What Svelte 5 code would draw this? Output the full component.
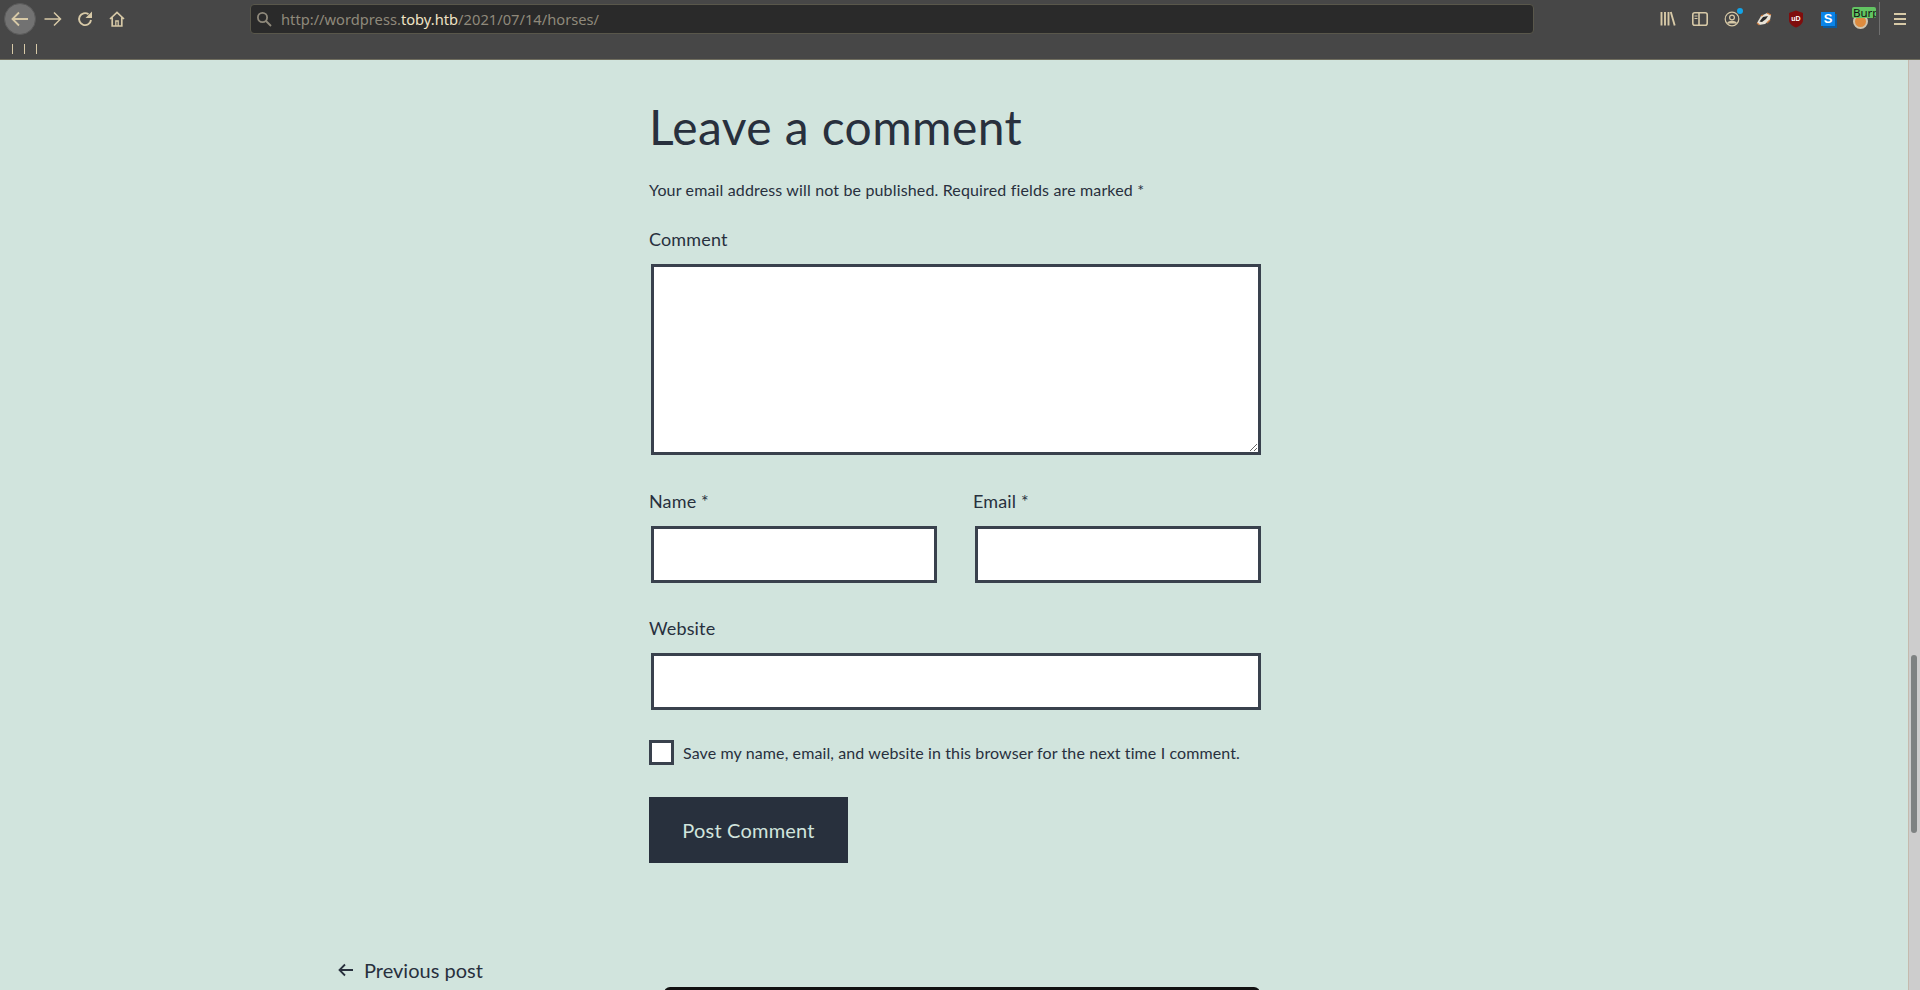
<script>
	const marks = [1, 2, 3];
</script>

<div class="page">
	<header class="chrome">
		<div class="navbar">
			<div class="back">
				<svg width="18" height="18" viewBox="0 0 18 18" fill="none" stroke="#d7c9a7" stroke-width="1.8"><path d="M17 9H1.500M8 2.500 1.500 9 8 15.500"/></svg>
			</div>
			<button class="tool first">
				<svg width="18" height="16" viewBox="0 0 18 16" fill="none" stroke="#d7c9a7" stroke-width="1.5"><path d="M0.500 8h16M10 1.500l6.500 6.500-6.500 6.500"/></svg>
			</button>
			<button class="tool">
				<svg width="16" height="16" viewBox="0 0 16 16" fill="none" stroke="#d7c9a7" stroke-width="1.900"><path d="M14 9A6 6 0 1 1 11.500 3.200"/><path d="M15 0.500v6.500H8.500z" fill="#d7c9a7" stroke="none"/></svg>
			</button>
			<button class="tool">
				<svg width="16" height="16" viewBox="0 0 16 16" fill="none" stroke="#d7c9a7" stroke-width="1.700"><path d="M1 8 8 1.500 15 8M3.200 6.500v8.500h9.600V6.500"/><path d="M6.800 15V10h2.400v5" stroke-width="1.300"/></svg>
			</button>
			<div class="urlbar">
				<svg width="16" height="16" viewBox="0 0 16 16" fill="none" stroke="#8f897b" stroke-width="1.800"><circle cx="6.500" cy="6.500" r="4.600"/><path d="m10 10 5 5"/></svg>
				<span class="url">http://wordpress.<b>toby.htb</b>/2021/07/14/horses/</span>
			</div>
			<div class="icons">
				<span class="slot"><svg width="16" height="15" viewBox="0 0 16 15" fill="none" stroke="#d7c9a7" stroke-width="1.900"><path d="M1.500 1v13.500M5 1v13.500M8.500 1v13.500M10.800 1l3.900 13.500"/></svg></span>
				<span class="slot"><svg width="16" height="14" viewBox="0 0 16 14" fill="none" stroke="#d7c9a7" stroke-width="1.600"><rect x="0.800" y="0.800" width="14.400" height="12.400" rx="2"/><path d="M7 1v12"/><path d="M2.500 4h3M2.500 6.500h3" stroke-width="1.100"/></svg></span>
				<span class="slot account">
					<svg width="16" height="16" viewBox="0 0 16 16" fill="none" stroke="#d7c9a7" stroke-width="1.200"><circle cx="8" cy="8" r="6.800"/><circle cx="8" cy="6.500" r="2.400"/><path d="M3.500 12.500c1-2.800 8-2.800 9 0" fill="#d7c9a7"/></svg>
					<i class="dot"></i>
				</span>
				<span class="slot"><svg width="16" height="14" viewBox="0 0 16 14"><path d="M1 11 5 4l6-3 4 2-1 5-5 4-6 1z" fill="#e8e2d6"/><path d="M3.500 9.500 7 5l5-1-2 3-4 3z" fill="#2a2a2a"/><path d="M1 11l2.500 2M11 1l4 2M5 4l2-1M14 8l-3 3" stroke="#c9773a" stroke-width="1.300" fill="none"/></svg></span>
				<span class="slot"><svg width="16" height="18" viewBox="0 0 16 18"><path d="M8 0.500 15 3v7c0 3.500-3.200 6-7 7.500-3.800-1.500-7-4-7-7.500V3z" fill="#7f0d0d"/><text x="8" y="11" class="ub">uD</text></svg></span>
				<span class="slot"><span class="stylus">S</span></span>
				<span class="slot burp"><i class="fox"></i><em>Burp</em></span>
			</div>
			<i class="sep"></i>
			<svg class="menu" width="12" height="12" viewBox="0 0 12 12" stroke="#d7c9a7" stroke-width="2"><path d="M0 1h12M0 6h12M0 11h12"/></svg>
		</div>
		<div class="bookmarks">
			{#each marks as m (m)}
				<span class="mark"></span>
			{/each}
		</div>
	</header>

	<div class="viewport">
		<main class="content">
			<section class="respond">
				<h2>Leave a comment</h2>
				<p class="notes">Your email address will not be published. Required fields are marked *</p>
				<label class="field">
					<span>Comment</span>
					<textarea></textarea>
				</label>
				<div class="pair">
					<label class="field">
						<span>Name *</span>
						<input type="text" />
					</label>
					<label class="field">
						<span>Email *</span>
						<input type="text" />
					</label>
				</div>
				<label class="field">
					<span>Website</span>
					<input type="text" />
				</label>
				<label class="save">
					<i class="box"></i>
					<span>Save my name, email, and website in this browser for the next time I comment.</span>
				</label>
				<button class="submit">Post Comment</button>
			</section>
			<div class="postnav">
				<div class="prev">
					<svg width="16" height="14" viewBox="0 0 16 14" fill="none" stroke="#28303d" stroke-width="1.800"><path d="M15 7H1.500M7 1.500 1.500 7 7 12.500"/></svg>
					<span>Previous post</span>
				</div>
				<div class="peek"></div>
			</div>
		</main>
		<aside class="scrollbar"><i class="thumb"></i></aside>
	</div>
</div>

<style>
	:global(body) {
		margin: 0;
		overflow: hidden;
		font-family: Lato, "Noto Sans", sans-serif;
	}

	.page {
		height: 990px;
		display: flex;
		flex-direction: column;
		overflow: hidden;
	}

	.chrome {
		height: 60px;
		box-sizing: border-box;
		flex: none;
		background: #474747;
		border-bottom: 1px solid #6f6d5e;
	}

	.navbar {
		height: 37px;
		display: flex;
		align-items: center;
	}

	.back {
		width: 32px;
		height: 32px;
		margin-left: 4px;
		flex: none;
		border-radius: 50%;
		background: #727272;
		border: 1px solid #5a5a5a;
		box-sizing: border-box;
		display: flex;
		align-items: center;
		justify-content: center;
	}

	.tool {
		width: 32px;
		height: 32px;
		padding: 0;
		border: 0;
		background: none;
		display: flex;
		align-items: center;
		justify-content: center;
		flex: none;
	}

	.tool.first {
		margin-left: 1px;
	}

	.urlbar {
		margin-left: 117px;
		width: 1284px;
		height: 30px;
		box-sizing: border-box;
		flex: none;
		background: #2a2a2a;
		border: 1px solid #59574b;
		border-radius: 4px;
		display: flex;
		align-items: center;
		gap: 9px;
		padding-left: 5px;
		font: 14.7px "Noto Sans", sans-serif;
		color: #8f897b;
	}

	.url b {
		font-weight: 400;
		color: #efe3c5;
	}

	.icons {
		margin-left: 118px;
		display: flex;
		align-items: center;
		flex: none;
	}

	.slot {
		width: 32px;
		height: 32px;
		display: flex;
		align-items: center;
		justify-content: center;
		position: relative;
	}

	.dot {
		position: absolute;
		left: 21px;
		top: 5px;
		width: 6px;
		height: 6px;
		border-radius: 50%;
		background: #12a4e8;
	}

	.ub {
		font: 700 7px "Liberation Sans", sans-serif;
		fill: #fff;
		text-anchor: middle;
	}

	.stylus {
		width: 14px;
		height: 14px;
		background: #0a84e8;
		box-shadow: 2px 2px 0 #0b5a9e;
		color: #fff;
		font: 700 13px/14px "Liberation Sans", sans-serif;
		text-align: center;
	}

	.burp em {
		position: absolute;
		left: 8px;
		top: 4px;
		width: 24px;
		height: 11px;
		box-sizing: border-box;
		padding-left: 1px;
		overflow: hidden;
		border-radius: 2px;
		background: #62c462;
		color: #111;
		font: normal 11.5px/11px "Noto Sans", sans-serif;
	}

	.fox {
		position: absolute;
		left: 9px;
		top: 11px;
		width: 15px;
		height: 15px;
		border-radius: 50%;
		background: #dd8b3e;
		border: 2px solid #cfc3ad;
		box-sizing: border-box;
	}

	.sep {
		width: 1px;
		height: 33px;
		margin-left: 3px;
		background: #6f6f6f;
		flex: none;
	}

	.menu {
		margin-left: 14px;
		flex: none;
	}

	.bookmarks {
		display: flex;
		gap: 11px;
		padding: 7px 0 0 12px;
	}

	.mark {
		width: 1px;
		height: 10px;
		background: #d7c9a7;
	}

	.viewport {
		flex: 1;
		min-height: 0;
		display: flex;
	}

	.content {
		flex: 1;
		min-width: 0;
		background: #d1e4dd;
		color: #28303d;
		overflow: hidden;
		font-size: 18px;
	}

	.respond {
		width: 612px;
		margin-left: 649px;
		padding-top: 37px;
	}

	h2 {
		margin: 0;
		font-size: 48px;
		line-height: 60px;
		font-weight: 400;
		letter-spacing: 0.4px;
	}

	.notes {
		margin: 23px 0 0;
		font-size: 16px;
		line-height: 20px;
		letter-spacing: 0.15px;
	}

	.field {
		display: flex;
		flex-direction: column;
		gap: 13px;
	}

	.field span {
		font-size: 18px;
		line-height: 24px;
		letter-spacing: 0.15px;
	}

	.notes + .field {
		margin-top: 27px;
	}

	textarea,
	input {
		display: block;
		box-sizing: border-box;
		margin: 0 0 0 2px;
		width: calc(100% - 2px);
		border: 3px solid #39414d;
		border-radius: 0;
		background: #fff;
		padding: 0;
		outline: none;
	}

	textarea {
		height: 191px;
		resize: vertical;
	}

	input {
		height: 57px;
	}

	.pair {
		display: flex;
		gap: 36px;
		margin-top: 34px;
	}

	.pair .field {
		flex: 1;
	}

	.pair + .field {
		margin-top: 33px;
	}

	.save {
		display: flex;
		align-items: center;
		gap: 9px;
		margin-top: 30px;
		font-size: 16px;
		letter-spacing: 0.11px;
	}

	.box {
		width: 25px;
		height: 25px;
		box-sizing: border-box;
		border: 3px solid #39414d;
		background: #fff;
		flex: none;
	}

	.submit {
		display: block;
		margin-top: 32px;
		width: 199px;
		height: 66px;
		border: 0;
		background: #28303d;
		color: #d1e4dd;
		font: 20px Lato, "Noto Sans", sans-serif;
		letter-spacing: 0.2px;
	}

	.postnav {
		position: relative;
		margin-top: 93px;
		padding-left: 338px;
		height: 70px;
	}

	.prev {
		display: flex;
		align-items: center;
		gap: 10px;
		font-size: 20px;
		line-height: 28px;
	}

	.peek {
		position: absolute;
		left: 664px;
		top: 31px;
		width: 596px;
		height: 40px;
		background: #111;
		border-radius: 6px 6px 0 0;
	}

	.scrollbar {
		width: 12px;
		flex: none;
		background: #cdcdcd;
		border-left: 1px solid #c5b9ad;
		box-sizing: border-box;
		padding: 595px 0 0 2px;
	}

	.thumb {
		display: block;
		height: 178px;
		width: 6px;
		border-radius: 3px;
		background: #7e8282;
	}
</style>
